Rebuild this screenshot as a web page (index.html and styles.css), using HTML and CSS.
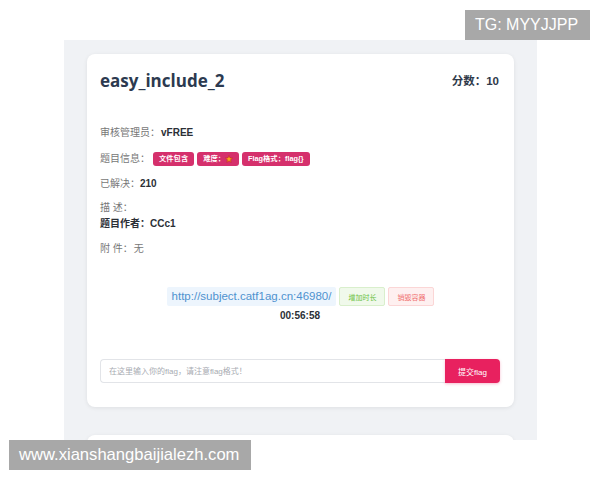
FILE: index.html
```html
<html><head>
    <title>easy_include_2</title>
    <meta name="viewport" content="width=device-width, initial-scale=1">
    <link rel="stylesheet" href="styles.css">
    </head>
    <body>
    <div class="mark mark-top">TG: MYYJJPP</div>
    <div class="panel">
        <div class="card">
            <div class="head">
                <h1>easy_include_2</h1>
                <span class="score">分数：10</span>
            </div>
            <p class="row r1"><span class="label">审核管理员：</span><strong class="gap">vFREE</strong></p>
            <p class="row r2"><span class="label">题目信息：</span>
                <span class="tag">文件包含</span><span class="tag">难度：<svg class="star" viewBox="0 0 10 10"><polygon points="5,0.6 6.3,3.6 9.5,3.8 7,5.9 7.8,9.2 5,7.4 2.2,9.2 3,5.9 0.5,3.8 3.7,3.6" fill="#f6a21d" stroke="#c62a2a" stroke-width="0.8"/></svg></span><span class="tag">Flag格式：flag{}</span>
            </p>
            <p class="row r3"><span class="label">已解决：</span><strong>210</strong></p>
            <p class="row r4"><span class="label">描 述：</span></p>
            <p class="row r5"><strong>题目作者：CCc1</strong></p>
            <p class="row r6"><span class="label">附 件：</span><span class="gap label">无</span></p>
            <div class="env">
                <span class="url">http://subject.catf1ag.cn:46980/</span>
                <button class="btn btn-green">增加时长</button>
                <button class="btn btn-red">销毁容器</button>
            </div>
            <div class="timer">00:56:58</div>
            <div class="submit">
                <input class="flag" placeholder="在这里输入你的flag，请注意flag格式！">
                <button class="send">提交flag</button>
            </div>
        </div>
        <div class="card card2"></div>
    </div>
    <div class="mark mark-bottom">www.xianshangbaijialezh.com</div>
    </body>
    </html>
```

FILE: styles.css
```css
html {
    font-family: "Liberation Sans", "Noto Sans CJK SC", sans-serif;
    background-color: #ffffff;
}
body {
    margin: 0;
    position: relative;
    height: 480px;
    overflow: hidden;
}
.mark {
    position: absolute;
    background-color: #a8a8a8;
    color: #ffffff;
    font-size: 16px;
    line-height: 30px;
    padding: 0 10px;
}
.mark-top {
    top: 10px;
    left: 465px;
    width: 105px;
}
.mark-bottom {
    top: 440px;
    left: 9px;
    width: 222px;
    font-size: 16.6px;
}
.panel {
    margin: 40px 0 0 64px;
    width: 473px;
    height: 400px;
    overflow: hidden;
    background-color: #f0f2f5;
    padding: 14px 23px 0 23px;
    box-sizing: border-box;
}
.card {
    background-color: #ffffff;
    border-radius: 8px;
    box-shadow: 0 1px 4px rgba(0, 0, 0, 0.08);
    padding: 14px 14px 24px 13px;
}
.card2 {
    margin-top: 28px;
    height: 40px;
    padding: 0;
}
.head {
    display: flex;
    justify-content: space-between;
    align-items: center;
    height: 24px;
}
h1 {
    margin: 0;
    font-family: "Open Sans", "Noto Sans CJK SC", sans-serif;
    font-size: 17px;
    font-weight: 700;
    color: #2c3a50;
}
.score {
    font-size: 11.5px;
    font-weight: bold;
    color: #303a4a;
    margin-right: 1px;
}
.row {
    margin: 0;
    font-size: 10px;
    line-height: 16px;
    height: 16px;
    color: #333;
    display: flex;
    align-items: center;
}
.row strong {
    color: #2b2f36;
}
.label {
    color: #777;
}
.gap {
    margin-left: 1px;
}
.r1 { margin-top: 33px; }
.r2 { margin-top: 10px; }
.r3 { margin-top: 9px; }
.r4 { margin-top: 8px; }
.r5 { margin-top: 0; }
.r6 { margin-top: 9px; }
.tag {
    display: inline-flex;
    align-items: center;
    height: 14px;
    padding: 0 6px;
    margin-left: 3px;
    border-radius: 3px;
    background-color: #d5306c;
    color: #ffffff;
    font-size: 7.3px;
    font-weight: bold;
}
.tag:first-of-type {
    margin-left: 4px;
}
.star {
    width: 8px;
    height: 8px;
}
.env {
    display: flex;
    justify-content: center;
    align-items: center;
    margin-top: 30px;
    gap: 3px;
    padding-left: 1px;
}
.url {
    background-color: #edf5fd;
    color: #4f92cf;
    font-size: 11.5px;
    line-height: 19px;
    padding: 0 5px;
    border-radius: 2px;
}
.btn {
    height: 19px;
    padding: 0 8px;
    font-size: 7px;
    border-radius: 2px;
    font-family: "Liberation Sans", "Noto Sans CJK SC", sans-serif;
}
.btn-green {
    background-color: #f0f9eb;
    border: 1px solid #d9efcc;
    color: #6cc244;
}
.btn-red {
    background-color: #fef0f0;
    border: 1px solid #fbd6d6;
    color: #f07070;
}
.timer {
    text-align: center;
    font-size: 10px;
    font-weight: bold;
    color: #2b2f36;
    margin-top: 3px;
    line-height: 14px;
}
.submit {
    display: flex;
    margin-top: 36px;
}
.flag {
    flex: 1;
    height: 24px;
    box-sizing: border-box;
    border: 1px solid #e2e4e8;
    border-right: none;
    border-radius: 4px 0 0 4px;
    padding: 0 8px;
    font-size: 8px;
    font-family: "Liberation Sans", "Noto Sans CJK SC", sans-serif;
}
.flag::placeholder {
    color: #a8abb2;
}
.send {
    width: 55px;
    height: 24px;
    border: none;
    border-radius: 0 4px 4px 0;
    background-color: #e8215f;
    color: #ffffff;
    font-size: 8px;
    font-family: "Liberation Sans", "Noto Sans CJK SC", sans-serif;
    box-shadow: 0 1px 3px rgba(232, 33, 95, 0.3);
}
```
